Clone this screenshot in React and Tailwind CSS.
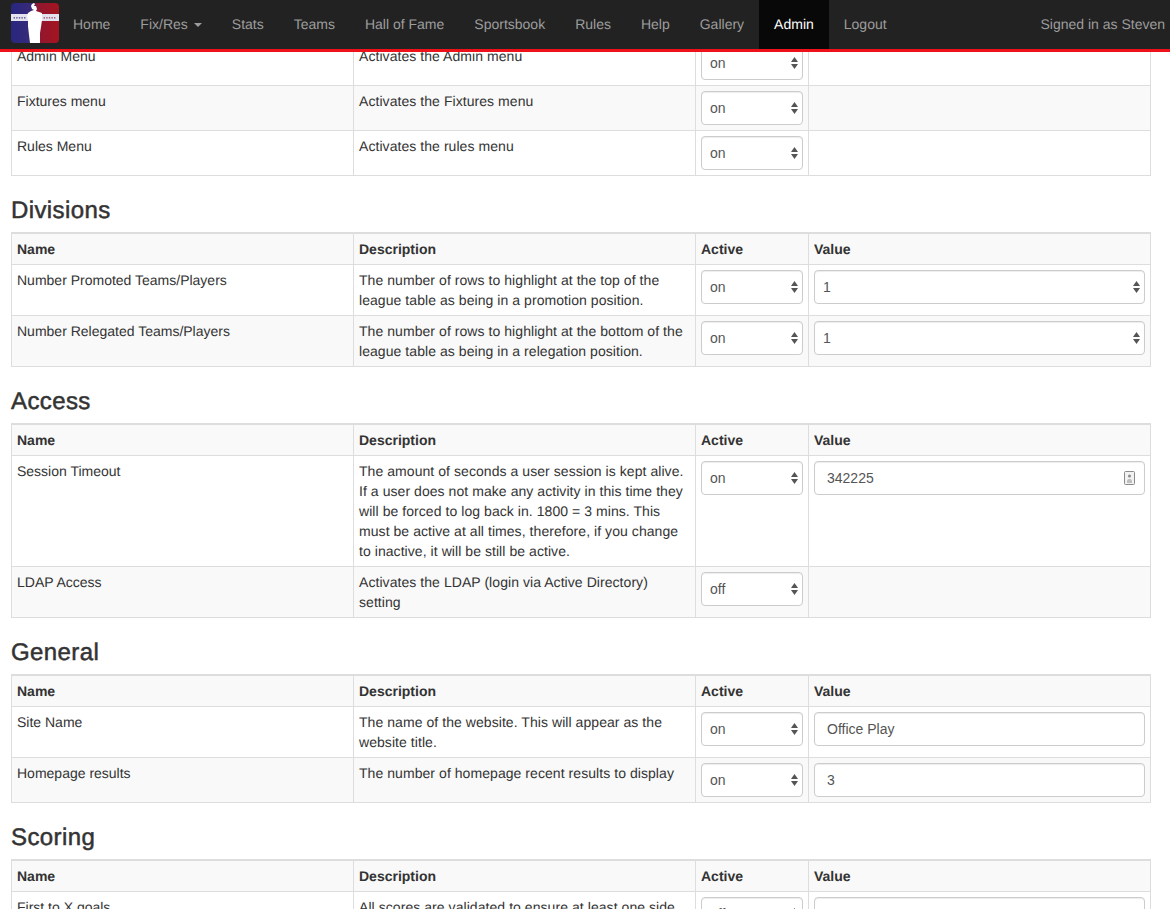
import React from 'react'

const navItems = ['Home', 'Fix/Res', 'Stats', 'Teams', 'Hall of Fame', 'Sportsbook', 'Rules', 'Help', 'Gallery', 'Admin', 'Logout']

const sections = [
  {
    rows: [
      { name: 'Admin Menu', desc: 'Activates the Admin menu', active: 'on' },
      { name: 'Fixtures menu', desc: 'Activates the Fixtures menu', active: 'on' },
      { name: 'Rules Menu', desc: 'Activates the rules menu', active: 'on' },
    ],
  },
  {
    title: 'Divisions',
    rows: [
      {
        name: 'Number Promoted Teams/Players',
        desc: 'The number of rows to highlight at the top of the league table as being in a promotion position.',
        active: 'on',
        select: '1',
      },
      {
        name: 'Number Relegated Teams/Players',
        desc: 'The number of rows to highlight at the bottom of the league table as being in a relegation position.',
        active: 'on',
        select: '1',
      },
    ],
  },
  {
    title: 'Access',
    rows: [
      {
        name: 'Session Timeout',
        desc: 'The amount of seconds a user session is kept alive. If a user does not make any activity in this time they will be forced to log back in. 1800 = 3 mins. This must be active at all times, therefore, if you change to inactive, it will be still be active.',
        active: 'on',
        input: '342225',
        autofill: true,
      },
      { name: 'LDAP Access', desc: 'Activates the LDAP (login via Active Directory) setting', active: 'off' },
    ],
  },
  {
    title: 'General',
    rows: [
      {
        name: 'Site Name',
        desc: 'The name of the website. This will appear as the website title.',
        active: 'on',
        input: 'Office Play',
      },
      { name: 'Homepage results', desc: 'The number of homepage recent results to display', active: 'on', input: '3' },
    ],
  },
  {
    title: 'Scoring',
    rows: [
      {
        name: 'First to X goals',
        desc: 'All scores are validated to ensure at least one side',
        active: 'off',
        input: '10',
      },
    ],
  },
]

function Logo() {
  return (
    <svg width="48" height="40" viewBox="0 0 48 40" className="block">
      <defs>
        <linearGradient id="logoFill" x1="0" y1="0" x2="1" y2="0">
          <stop offset="0" stopColor="#27277f" />
          <stop offset="0.45" stopColor="#3a2a78" />
          <stop offset="0.55" stopColor="#8f1730" />
          <stop offset="1" stopColor="#a5141f" />
        </linearGradient>
      </defs>
      <rect width="48" height="40" rx="4" fill="url(#logoFill)" />
      <rect y="11" width="48" height="7" fill="#e4e2ee" />
      {[1, 2, 3, 4, 5].map((n) => (
        <g key={n}>
          <rect x={n * 2.6} y="14" width="1.4" height="1.6" fill="#6b6896" />
          <rect x={30 + n * 2.6} y="14" width="1.4" height="1.6" fill="#a0687a" />
        </g>
      ))}
      <path
        d="M21 1l2-1 1 1-1 2 2 0 1 3-1 2 3 1 3 1 0 7-1 7-1 6 0 10H19l-1-8-1-9 0-6-1-4 1-3 3-2 3-1-2-1-1-3z"
        fill="#fff"
      />
    </svg>
  )
}

function Navbar() {
  return (
    <nav className="fixed top-0 left-0 right-0 z-10 flex h-[52px] border-b-[3px] border-[#ee1119] bg-[#222] text-[#9d9d9d]">
      <div className="w-[58px] shrink-0 pl-[11px] pt-[3px]">
        <Logo />
      </div>
      {navItems.map((item) => (
        <a
          key={item}
          className={`flex items-center px-[15px] pb-[2px] ${item === 'Admin' ? 'bg-[#080808] text-white' : ''}`}
        >
          {item}
          {item === 'Fix/Res' && (
            <span className="ml-[6px] mt-[2px] h-0 w-0 border-x-4 border-t-4 border-x-transparent border-t-[#9d9d9d]" />
          )}
        </a>
      ))}
      <span className="ml-auto flex items-center pb-[2px] pr-[5px]">Signed in as Steven</span>
    </nav>
  )
}

function SelectArrows() {
  return (
    <svg width="7" height="12" viewBox="0 0 7 12" className="pointer-events-none absolute right-[5px] top-[11px]">
      <path d="M3.5 0L7 5H0z" fill="#555" />
      <path d="M0 7h7l-3.5 5z" fill="#555" />
    </svg>
  )
}

function SelectBox({ value }) {
  return (
    <div className="relative">
      <select
        defaultValue={value}
        className="block h-[34px] w-full appearance-none rounded border border-[#ccc] bg-white pl-2 text-[#555] shadow-[inset_0_1px_1px_rgba(0,0,0,0.075)]"
      >
        <option>{value}</option>
      </select>
      <SelectArrows />
    </div>
  )
}

function TextBox({ value, autofill }) {
  return (
    <div className="relative">
      <input
        readOnly
        value={value}
        className="block h-[34px] w-full rounded border border-[#ccc] bg-white px-3 text-[#555] shadow-[inset_0_1px_1px_rgba(0,0,0,0.075)]"
      />
      {autofill && (
        <svg width="11" height="14" viewBox="0 0 11 14" className="absolute right-[10px] top-[10px]">
          <rect x="0.5" y="0.5" width="10" height="13" rx="1" fill="#f2f2f2" stroke="#8a8a8a" />
          <circle cx="5.5" cy="5" r="1.5" fill="#8a8a8a" />
          <path d="M3 9.5c0-1.5 5-1.5 5 0z" fill="#8a8a8a" />
          <rect x="3" y="10.5" width="5" height="1" fill="#8a8a8a" />
        </svg>
      )}
    </div>
  )
}

function SettingsTable({ title, rows }) {
  const cell = 'border border-[#ddd] p-[5px] align-top'

  return (
    <section className={title ? 'mb-[19.5px]' : 'mb-5'}>
      {title && (
        <h3 className="mb-[6.4px] text-[24px] leading-[30px] font-normal tracking-[0.4px] [-webkit-text-stroke:0.5px_#333]">
          {title}
        </h3>
      )}
      <table className="w-[1139px] table-fixed border-collapse">
        <colgroup>
          <col className="w-[342px]" />
          <col className="w-[342px]" />
          <col className="w-[113px]" />
          <col className="w-[342px]" />
        </colgroup>
        <tbody>
          {title && (
            <tr className="bg-[#f9f9f9] text-left">
              {['Name', 'Description', 'Active', 'Value'].map((head) => (
                <th key={head} className={`${cell} border-t-2 font-bold`}>
                  {head}
                </th>
              ))}
            </tr>
          )}
          {rows.map((row, i) => (
            <tr key={row.name} className={i % 2 === 1 ? 'bg-[#f9f9f9]' : 'bg-white'}>
              <td className={cell}>{row.name}</td>
              <td className={`${cell} tracking-[0.06px]`}>{row.desc}</td>
              <td className={cell}>
                <SelectBox value={row.active} />
              </td>
              <td className={cell}>
                {row.select && <SelectBox value={row.select} />}
                {row.input && <TextBox value={row.input} autofill={row.autofill} />}
              </td>
            </tr>
          ))}
        </tbody>
      </table>
    </section>
  )
}

export default function App() {
  return (
    <div className="h-[909px] overflow-hidden bg-white font-['Liberation_Sans',Arial,sans-serif] text-[14px] leading-5 text-[#333] [text-rendering:geometricPrecision]">
      <Navbar />
      <main className="pl-[11px] pt-10">
        {sections.map((section, i) => (
          <SettingsTable key={i} title={section.title} rows={section.rows} />
        ))}
      </main>
    </div>
  )
}
